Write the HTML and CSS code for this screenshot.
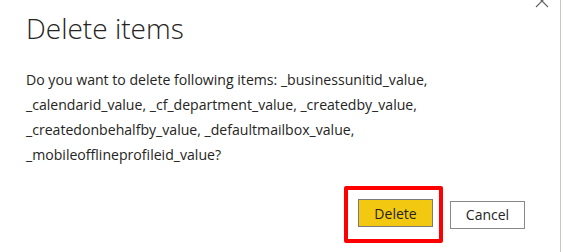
FILE: index.html
```html
<!DOCTYPE html>
<html lang="en">
<head>
    <meta charset="UTF-8">
    <title>Delete items</title>
    <link rel="stylesheet" href="styles.css">
</head>
<body>
    <div class="dialog">
        <button class="close-btn" title="Close">
            <svg width="14" height="14" viewBox="0 0 14 14"><path d="M1 1L13 13M13 1L1 13" stroke="#666" stroke-width="1.2" fill="none"/></svg>
        </button>
        <h1 class="title">Delete items</h1>
        <p class="message">Do you want to delete following items: _businessunitid_value, _calendarid_value, _cf_department_value, _createdby_value, _createdonbehalfby_value, _defaultmailbox_value, _mobileofflineprofileid_value?</p>
        <div class="actions">
            <div class="highlight">
                <button class="btn btn-primary">Delete</button>
            </div>
            <button class="btn">Cancel</button>
        </div>
    </div>
</body>
</html>
```

FILE: styles.css
```css
body {
    margin: 0;
    background: #fff;
    font-family: 'Open Sans', 'Noto Sans', sans-serif;
    color: #252423;
}
.dialog {
    position: relative;
    width: 561px;
    height: 252px;
    box-sizing: border-box;
    border-right: 1px solid #c8c6c4;
    padding: 10px 0 0 26px;
}
.close-btn {
    position: absolute;
    top: -6px;
    left: 535px;
    width: 14px;
    height: 14px;
    padding: 0;
    border: none;
    background: none;
}
.close-btn svg {
    display: block;
}
.title {
    margin: 0;
    font-size: 28px;
    font-weight: 300;
    line-height: 36px;
}
.message {
    margin: 21px 0 0;
    width: 470px;
    font-size: 14.1px;
    line-height: 25px;
}
.actions {
    display: flex;
    align-items: center;
    margin: 19px 0 0 318px;
}
.highlight {
    border: 4px solid #f00;
    border-radius: 2px;
    padding: 9px 6px 12px 10px;
    margin-right: 7px;
}
.btn {
    display: block;
    width: 75px;
    height: 28px;
    box-sizing: border-box;
    border: 1px solid #8a8886;
    background: #fff;
    font-family: inherit;
    font-size: 14px;
    color: #252423;
    padding: 0;
}
.btn-primary {
    background: #f2c811;
    border-color: #7a7a7a;
}
```
